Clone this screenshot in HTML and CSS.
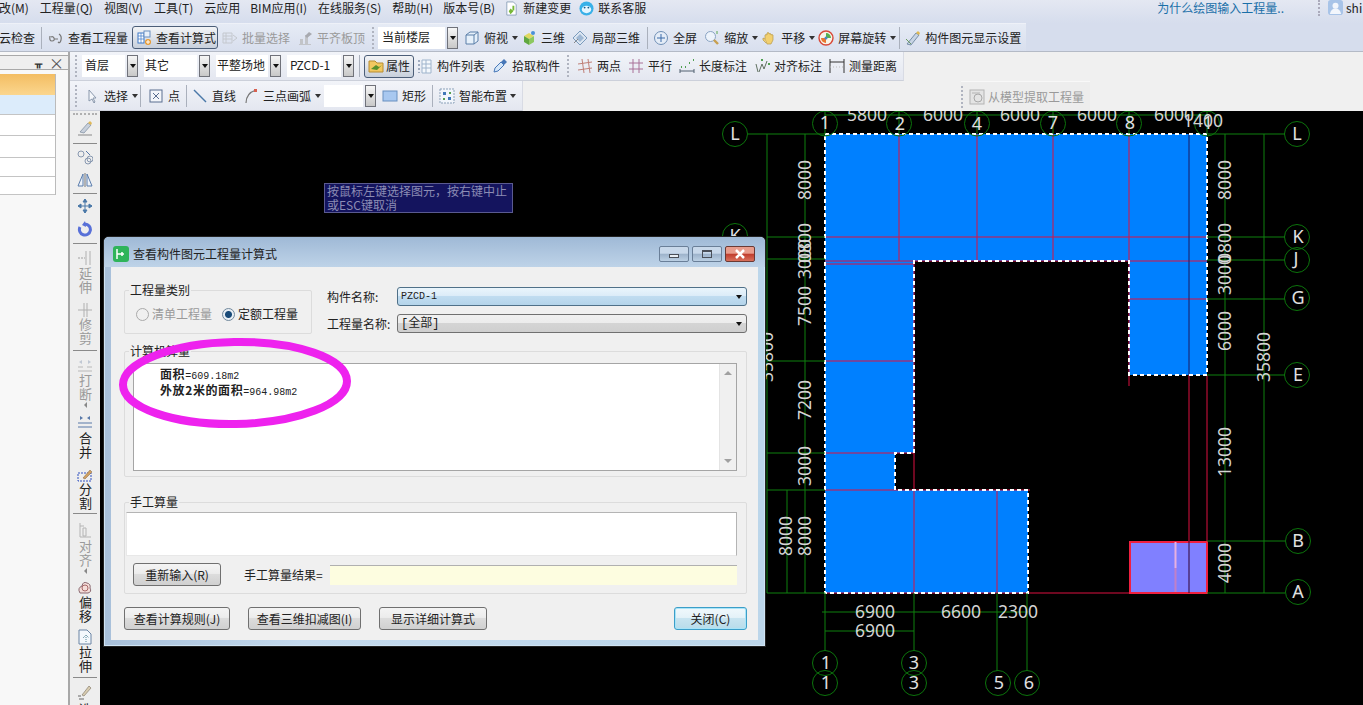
FILE: index.html
```html
<!DOCTYPE html>
<html lang="zh-CN">
<head>
<meta charset="utf-8">
<title>查看构件图元工程量计算式</title>
<link rel="stylesheet" href="styles.css">
</head>
<body>
<svg class="defs" width="0" height="0" aria-hidden="true">
  <defs>
    <symbol id="i-glasses" viewBox="0 0 16 16"><path d="M2 6q-1 5 2 5t2-3q-1-2-3-1M11 4q3 2 2 6t-3 2M6 9h4" fill="none" stroke="#777" stroke-width="1.2"/></symbol>
    <symbol id="i-calc" viewBox="0 0 16 16"><rect x="2" y="3" width="6" height="10" fill="#fff" stroke="#3c78c8"/><path d="M2 6h6M2 9h6M5 3v10" stroke="#3c78c8" stroke-width=".7"/><rect x="8" y="1" width="6" height="6" fill="#e8f0fa" stroke="#6a8fc0"/><circle cx="12" cy="12" r="3" fill="#e89a30"/><path d="M10 12h4M12 10v4" stroke="#fff"/></symbol>
    <symbol id="i-batch" viewBox="0 0 16 16"><path d="M1 3h9v10H1zM1 6h9M1 9h9M4 3v10M11 5l4 3-4 3" fill="none" stroke="#c4c8ce"/></symbol>
    <symbol id="i-align" viewBox="0 0 16 16"><path d="M2 14h12v1H2zM3 9h3v5H3zM8 5h3v9H8z" fill="#c2c4c8"/><path d="M12 2l3 2-5 4-2-2z" fill="#a8aab0"/></symbol>
    <symbol id="i-cube" viewBox="0 0 16 16"><path d="M2 5l4-3h8v9l-4 3H2z" fill="#e6f0fa" stroke="#5b7fa8"/><path d="M2 5h8v9M10 5l4-3" fill="none" stroke="#5b7fa8"/></symbol>
    <symbol id="i-3d" viewBox="0 0 16 16"><path d="M3 6l5-3 5 3-5 3z" fill="#e0d860"/><path d="M3 6v6l5 3V9z" fill="#60a840"/><path d="M13 6v6l-5 3V9z" fill="#8cc860"/><circle cx="12" cy="3" r="2" fill="#4a90d8"/></symbol>
    <symbol id="i-local3d" viewBox="0 0 16 16"><path d="M8 1l7 7-7 7-7-7z" fill="#dce6f2" stroke="#7a9abc"/><path d="M4 8l4-4 4 4-4 4z" fill="#9fb8d4"/><path d="M2 13l4-4" stroke="#888"/></symbol>
    <symbol id="i-full" viewBox="0 0 16 16"><circle cx="8" cy="8" r="6.5" fill="#e4ecf7" stroke="#6f8fb5"/><path d="M8 4v8M4 8h8" stroke="#3a6ba8"/></symbol>
    <symbol id="i-zoom" viewBox="0 0 16 16"><circle cx="6.5" cy="6.5" r="5" fill="#edf3fb" stroke="#8aa4c4"/><path d="M10 10l4 4" stroke="#c8a050" stroke-width="2.4"/><path d="M13 1v3" stroke="#58a850"/></symbol>
    <symbol id="i-hand" viewBox="0 0 16 16"><path d="M4 9V5q1-1 2 0V3q1-1 2 0v1q1-1 2 0v1q1-1 2 0v5l-2 4H6z" fill="#f2d070" stroke="#b89a48" stroke-width=".7"/><path d="M4 9l-2-1v2l3 3" fill="#f2d070" stroke="#b89a48" stroke-width=".7"/></symbol>
    <symbol id="i-rot" viewBox="0 0 16 16"><circle cx="8" cy="8" r="7" fill="#f8f4e8" stroke="#d84838" stroke-width="1.4"/><path d="M8 3a5 5 0 0 1 5 5H8z" fill="#58b050"/><path d="M8 13a5 5 0 0 1-5-5h5z" fill="#e87830"/><circle cx="8" cy="8" r="1.5" fill="#4888c8"/></symbol>
    <symbol id="i-show" viewBox="0 0 16 16"><path d="M2 14L11 3l3 2-8 10z" fill="#c8d4e4" stroke="#7890a8"/><path d="M11 3l2-2 2 2-1 2z" fill="#e0b850"/><path d="M1 9l5 5" stroke="#689860"/></symbol>
    <symbol id="i-doc" viewBox="0 0 16 16"><path d="M3 1h7l3 3v11H3z" fill="#fff" stroke="#8fa3bb"/><path d="M7 8l3 3-3 3-2-3zM9 5h2v5H9z" fill="#78b838"/></symbol>
    <symbol id="i-face" viewBox="0 0 16 16"><circle cx="8" cy="8" r="7.5" fill="#38b0e8"/><ellipse cx="8" cy="9" rx="5" ry="4" fill="#e4f6ff"/><circle cx="6" cy="7" r="1" fill="#1c5a88"/><circle cx="10" cy="7" r="1" fill="#1c5a88"/></symbol>
    <symbol id="i-user" viewBox="0 0 16 16"><rect width="16" height="16" rx="3" fill="#a8c4e8"/><circle cx="8" cy="6" r="3.2" fill="#f2f6fc"/><path d="M2 15q1-6 6-6t6 6z" fill="#f2f6fc"/></symbol>
    <symbol id="i-prop" viewBox="0 0 16 16"><path d="M1 3h6l2 2h6v9H1z" fill="#f2c860" stroke="#b88c30"/><path d="M3 11l5-4 3 2 3-2-5 5z" fill="#58902c"/></symbol>
    <symbol id="i-list" viewBox="0 0 16 16"><path d="M2 2v2M2 6v2M2 10v2M2 14v1" stroke="#8090a8" stroke-width="1.4"/><path d="M5 2h9v13H5zM5 6h9M5 10h9M9 2v13" fill="#f4f8fc" stroke="#9fb4cc"/></symbol>
    <symbol id="i-pick" viewBox="0 0 16 16"><path d="M2 14l1-4 6-6 3 3-6 6z" fill="#d4e6f8" stroke="#4878b8"/><path d="M9 4l3-3 3 3-3 3z" fill="#4878b8"/></symbol>
    <symbol id="i-twop" viewBox="0 0 16 16"><path d="M5 1l2 14M11 1l2 14M1 6l14-2M1 12l14-2" stroke="#c08078" fill="none"/></symbol>
    <symbol id="i-para" viewBox="0 0 16 16"><path d="M5 1v14M11 1v14M1 5h14M1 11h14" stroke="#a87098" fill="none"/></symbol>
    <symbol id="i-dim" viewBox="0 0 16 16"><path d="M1 11v4M15 11v4M1 13h14" stroke="#506070" fill="none"/><path d="M2 9h1M6 9h1M10 5h1M14 2h1" stroke="#50a050" stroke-width="2"/></symbol>
    <symbol id="i-adim" viewBox="0 0 16 16"><path d="M2 6l2 8M5 14l3-8M8 6l2 5M10 11l3-8" stroke="#607060" fill="none"/><path d="M7 2h2M14 6h2" stroke="#50a050" stroke-width="2"/></symbol>
    <symbol id="i-measure" viewBox="0 0 16 16"><path d="M1 1v14M15 1v14M1 4h14" stroke="#333" fill="none"/><path d="M1 9h14" stroke="#bbb" stroke-dasharray="1 2"/></symbol>
    <symbol id="i-cursor" viewBox="0 0 16 16"><path d="M5 2v11l3-2 2 4 1-1-2-4h3z" fill="#f4f6fa" stroke="#8a98ac"/></symbol>
    <symbol id="i-point" viewBox="0 0 16 16"><rect x="2" y="2" width="12" height="12" fill="#f4f6fa" stroke="#5a6e90"/><path d="M5 5l6 6M11 5l-6 6" stroke="#5a6e90"/></symbol>
    <symbol id="i-line" viewBox="0 0 16 16"><path d="M2 2l12 12" stroke="#4a78a8" stroke-width="1.4"/></symbol>
    <symbol id="i-arc" viewBox="0 0 16 16"><path d="M3 15Q3 5 13 2" fill="none" stroke="#787878" stroke-width="1.2"/><path d="M11 1h3v3h-3z" fill="#d86050"/></symbol>
    <symbol id="i-rect" viewBox="0 0 16 16"><rect x="1" y="3" width="14" height="10" fill="#a8c8f0" stroke="#6890c0"/></symbol>
    <symbol id="i-smart" viewBox="0 0 16 16"><rect x="1" y="1" width="14" height="14" fill="#f2f6fc" stroke="#8aa0b8" stroke-dasharray="2 1"/><path d="M4 4h3v3H4zM9 9h3v3H9z" fill="#3f78b8"/><path d="M10 4h2v2h-2zM4 10h2v2H4z" fill="#58a050"/></symbol>
    <symbol id="i-extract" viewBox="0 0 16 16"><rect x="1" y="1" width="14" height="14" fill="#e4e4e4" stroke="#b4b4b4"/><circle cx="9" cy="9" r="4" fill="none" stroke="#a8a8a8"/><path d="M3 4h8" stroke="#b4b4b4"/></symbol>
    <symbol id="i-brush" viewBox="0 0 16 16"><path d="M1 15h14" stroke="#888"/><path d="M3 12l8-9 3 2-7 8z" fill="#c8d0dc" stroke="#7a8a9c" stroke-width=".7"/><path d="M11 3l2-2 2 2-1 2z" fill="#e0b858"/></symbol>
    <symbol id="i-copy" viewBox="0 0 16 16"><circle cx="4" cy="5" r="3" fill="none" stroke="#8898b0"/><circle cx="11" cy="12" r="3" fill="none" stroke="#8898b0"/><circle cx="13" cy="10" r="3" fill="none" stroke="#8898b0"/><path d="M9 2l4 4" stroke="#5878a8"/></symbol>
    <symbol id="i-mirror" viewBox="0 0 16 16"><path d="M8 1v14" stroke="#777"/><path d="M6 2v12H1zM10 2v12h5z" fill="#eef3fa" stroke="#5a7cac"/></symbol>
    <symbol id="i-move" viewBox="0 0 16 16"><path d="M8 1v14M1 8h14M8 1L6 4h4zM8 15l-2-3h4zM1 8l3-2v4zM15 8l-3-2v4z" fill="#4a78a8" stroke="#4a78a8"/></symbol>
    <symbol id="i-rotate" viewBox="0 0 16 16"><path d="M8 3a5.5 5.5 0 1 1-5 3" fill="none" stroke="#5870d8" stroke-width="3"/><path d="M8 0l-3 4 4 2z" fill="#5870d8"/></symbol>
    <symbol id="i-extend" viewBox="0 0 16 16"><path d="M13 1v14M9 1v14" stroke="#b0b0b0" fill="none"/><path d="M1 8h7" stroke="#a0a0a0" stroke-dasharray="2 1"/></symbol>
    <symbol id="i-trim" viewBox="0 0 16 16"><path d="M7 1v14M10 1v14M1 8h14" stroke="#b0b0b0" fill="none"/></symbol>
    <symbol id="i-break" viewBox="0 0 16 16"><path d="M1 10h5M10 10h5M1 14h14" stroke="#b8b8b8"/><path d="M2 5l3-2v4zM14 5l-3-2v4z" fill="#c0c8d4"/></symbol>
    <symbol id="i-merge" viewBox="0 0 16 16"><path d="M1 9h14M1 13h14" stroke="#5878a8"/><path d="M6 4L3 2v4zM10 4l3-2v4z" fill="#5878a8"/></symbol>
    <symbol id="i-split" viewBox="0 0 16 16"><rect x="1" y="6" width="13" height="8" fill="none" stroke="#3050c0" stroke-dasharray="2 1"/><path d="M6 11l7-8 2 2-7 7z" fill="#d0a060" stroke="#806040" stroke-width=".5"/></symbol>
    <symbol id="i-alignv" viewBox="0 0 16 16"><path d="M3 1v14h11M6 6h3v8H6zM3 4h4" fill="none" stroke="#b4b4b4"/></symbol>
    <symbol id="i-offset" viewBox="0 0 16 16"><path d="M3 14q-3-5 2-7 1-5 5-3 4 1 3 5 2 4-2 5z" fill="#f4dcd8" stroke="#8a6870"/><circle cx="8" cy="9" r="3" fill="none" stroke="#a86868"/></symbol>
    <symbol id="i-stretch" viewBox="0 0 16 16"><path d="M2 1h8l4 4v10H2z" fill="#f4f8fc" stroke="#6a84a4"/><path d="M9 6v7M6 9l3-3 3 3" fill="none" stroke="#5a8a9c" stroke-dasharray="1 1"/></symbol>
    <symbol id="i-pencil" viewBox="0 0 16 16"><path d="M2 15h5M1 12h3" stroke="#666"/><path d="M5 11l7-9 2 2-7 8z" fill="#d8ccb0" stroke="#8a8070" stroke-width=".7"/></symbol>
  </defs>
</svg>

<div class="app">
  <div class="menubar">
    <span class="menu-item first">改(M)</span>
    <span class="menu-item">工程量(Q)</span>
    <span class="menu-item">视图(V)</span>
    <span class="menu-item">工具(T)</span>
    <span class="menu-item">云应用</span>
    <span class="menu-item narrow">BIM应用(I)</span>
    <span class="menu-item">在线服务(S)</span>
    <span class="menu-item">帮助(H)</span>
    <span class="menu-item narrow">版本号(B)</span>
    <span class="tool ml9"><svg class="ico"><use href="#i-doc"/></svg><span>新建变更</span></span>
    <span class="tool ml8"><svg class="ico"><use href="#i-face"/></svg><span>联系客服</span></span>
    <span class="menu-right">
      <a class="help-link">为什么绘图输入工程量..</a>
      <span class="grip-v"></span>
      <svg class="ico"><use href="#i-user"/></svg>
      <span class="user">shi</span>
    </span>
  </div>

  <div class="mainbar">
    <div class="tb tb-top">
      <span class="txt ml-1">云检查</span>
      <span class="sep ml6"></span>
      <span class="tool ml6"><svg class="ico"><use href="#i-glasses"/></svg><span>查看工程量</span></span>
      <span class="tool pressed ml4 w86"><svg class="ico"><use href="#i-calc"/></svg><span>查看计算式</span></span>
      <span class="tool off ml4"><svg class="ico"><use href="#i-batch"/></svg><span>批量选择</span></span>
      <span class="tool off ml7"><svg class="ico"><use href="#i-align"/></svg><span>平齐板顶</span></span>
      <span class="grip ml7"></span>
      <span class="combo ml4 w80"><span class="combo-field">当前楼层</span><span class="combo-arrow"></span></span>
      <span class="tool ml6"><svg class="ico"><use href="#i-cube"/></svg><span>俯视</span></span><span class="caret ml4"></span>
      <span class="tool ml3"><svg class="ico"><use href="#i-3d"/></svg><span>三维</span></span>
      <span class="tool ml7"><svg class="ico"><use href="#i-local3d"/></svg><span>局部三维</span></span>
      <span class="sep ml7"></span>
      <span class="tool ml5"><svg class="ico"><use href="#i-full"/></svg><span>全屏</span></span>
      <span class="tool ml7"><svg class="ico"><use href="#i-zoom"/></svg><span>缩放</span></span><span class="caret ml4"></span>
      <span class="tool ml3"><svg class="ico"><use href="#i-hand"/></svg><span>平移</span></span><span class="caret ml4"></span>
      <span class="tool ml3"><svg class="ico"><use href="#i-rot"/></svg><span>屏幕旋转</span></span><span class="caret ml4"></span>
      <span class="sep ml3"></span>
      <span class="tool ml5"><svg class="ico"><use href="#i-show"/></svg><span>构件图元显示设置</span></span>
    </div>
  </div>

  <div class="work">
    <aside class="side">
      <div class="side-head"><span class="pin">ᚂ</span><span class="side-close">×</span></div>
      <div class="side-table">
        <div class="st-row st-head"></div>
        <div class="st-row st-sel"></div>
        <div class="st-row st-a"></div>
        <div class="st-row st-b"></div>
        <div class="st-row st-c"></div>
        <div class="st-row st-c"></div>
      </div>
    </aside>

    <div class="main">
      <div class="tb-row">
        <div class="tb tb-lower">
          <span class="grip ml5"></span>
          <span class="combo ml5 w56"><span class="combo-field snug">首层</span><span class="combo-arrow"></span></span>
          <span class="combo ml6 w66"><span class="combo-field flush">其它</span><span class="combo-arrow"></span></span>
          <span class="combo ml6 w65"><span class="combo-field flush">平整场地</span><span class="combo-arrow"></span></span>
          <span class="combo ml6 w67"><span class="combo-field snug">PZCD-1</span><span class="combo-arrow"></span></span>
          <span class="sep ml5"></span>
          <span class="tool pressed tight ml4 w50"><svg class="ico"><use href="#i-prop"/></svg><span>属性</span></span>
          <span class="tool ml3"><svg class="ico"><use href="#i-list"/></svg><span>构件列表</span></span>
          <span class="tool ml7"><svg class="ico"><use href="#i-pick"/></svg><span>拾取构件</span></span>
          <span class="grip ml7"></span>
          <span class="tool ml8"><svg class="ico"><use href="#i-twop"/></svg><span>两点</span></span>
          <span class="tool ml7"><svg class="ico"><use href="#i-para"/></svg><span>平行</span></span>
          <span class="tool ml7"><svg class="ico"><use href="#i-dim"/></svg><span>长度标注</span></span>
          <span class="tool ml7"><svg class="ico"><use href="#i-adim"/></svg><span>对齐标注</span></span>
          <span class="tool ml7"><svg class="ico"><use href="#i-measure"/></svg><span>测量距离</span></span>
        </div>
      </div>
      <div class="tb-row">
        <div class="tb tb-lower">
          <span class="grip ml5"></span>
          <span class="tool ml7"><svg class="ico"><use href="#i-cursor"/></svg><span>选择</span></span><span class="caret ml4"></span>
          <span class="sep ml2"></span>
          <span class="tool ml7"><svg class="ico"><use href="#i-point"/></svg><span>点</span></span>
          <span class="sep ml6"></span>
          <span class="tool ml5"><svg class="ico"><use href="#i-line"/></svg><span>直线</span></span>
          <span class="tool ml7"><svg class="ico"><use href="#i-arc"/></svg><span>三点画弧</span></span><span class="caret ml4"></span>
          <span class="combo ml3 w52"><span class="combo-field"></span><span class="combo-arrow"></span></span>
          <span class="tool ml6"><svg class="ico"><use href="#i-rect"/></svg><span>矩形</span></span>
          <span class="sep ml6"></span>
          <span class="tool ml6"><svg class="ico"><use href="#i-smart"/></svg><span>智能布置</span></span><span class="caret ml3"></span>
        </div>
        <div class="tb tb-extract">
          <span class="grip"></span>
          <span class="tool off ml6 close-gap"><svg class="ico"><use href="#i-extract"/></svg><span>从模型提取工程量</span></span>
        </div>
      </div>

      <div class="stage">
        <nav class="vtools">
          <span class="grip-h mt2"></span>
          <svg class="ico mt5"><use href="#i-brush"/></svg>
          <span class="vsep mt7"></span>
          <svg class="ico mt5"><use href="#i-copy"/></svg>
          <svg class="ico mt7"><use href="#i-mirror"/></svg>
          <span class="vsep mt5"></span>
          <svg class="ico mt4"><use href="#i-move"/></svg>
          <svg class="ico mt7"><use href="#i-rotate"/></svg>
          <span class="vsep mt6"></span>
          <svg class="ico mt6"><use href="#i-extend"/></svg>
          <span class="vtext off mt1">延伸</span>
          <svg class="ico mt7"><use href="#i-trim"/></svg>
          <span class="vtext off">修剪</span>
          <span class="vsep mt4"></span>
          <svg class="ico mt6"><use href="#i-break"/></svg>
          <span class="vtext off mt1">打断</span>
          <span class="vcaret"></span>
          <svg class="ico mt6"><use href="#i-merge"/></svg>
          <span class="vtext mt2">合并</span>
          <svg class="ico mt7"><use href="#i-split"/></svg>
          <span class="vtext">分割</span>
          <span class="vsep mt2"></span>
          <svg class="ico mt8"><use href="#i-alignv"/></svg>
          <span class="vtext off mt2">对齐</span>
          <span class="vcaret"></span>
          <svg class="ico mt5"><use href="#i-offset"/></svg>
          <span class="vtext mt1">偏移</span>
          <svg class="ico mt5"><use href="#i-stretch"/></svg>
          <span class="vtext mt1">拉伸</span>
          <span class="vsep mt3"></span>
          <svg class="ico mt6"><use href="#i-pencil"/></svg>
          <span class="vtext mt3">选择</span>
        </nav>

        <div class="canvas">
          <svg class="drawing" viewBox="100 111 1263 594" xmlns="http://www.w3.org/2000/svg">
            <path class="area" d="M825 134H1207V375H1129V261H914V453H895V490H1028V593H825Z"/>
            <g class="redline">
              <path d="M899 134V261M977 134V261M1053 134V261M1129 134V261M825 237H1207M825 261H1207M825 264H914M1129 299H1207M825 361H914M825 453H914M825 490H1030M914 264V593M997 490V593M825 593H1130M1189 375V541M1207 375V541M1129 375V386M1129 261V375"/>
            </g>
            <path class="darkline" d="M1189 134V375"/>
            <path class="outline" d="M825 134H1207V375H1129V261H914V453H895V490H1028V593H825Z"/>
            <rect class="opening" x="1130" y="542" width="77" height="51"/>
            <path class="opening-a" d="M1175.500 542V568"/>
            <path class="opening-b" d="M1175.500 568V592"/>
            <path class="opening-c" d="M1189 541V593"/>

            <g class="greenline">
              <path d="M825 115H1207M825 111V134M899 111V134M977 111V134M1053 111V134M1129 111V134M1207 111V134"/>
              <path d="M748 134H825M1207 134H1285M767 134V593M805 134V593M1225 134V593M1264 134V593M767 237H825M1207 237H1285M767 259H825M1207 260H1285M1207 299H1285M767 361H825M1207 375H1285M767 453H825M767 490H825M787 490V593M767 593H825M1207 541H1285M1207 593H1285"/>
              <path d="M825 593V651M914 593V651M997 593V671M1027 593V671M822 612H1028M825 631H914"/>
            </g>
            <g class="axis">
              <circle cx="735" cy="134" r="12.500"/><circle cx="735" cy="236" r="12.500"/>
              <circle cx="825" cy="123.500" r="12.500"/><circle cx="899" cy="123.500" r="12.500"/><circle cx="977" cy="123.500" r="12.500"/><circle cx="1053" cy="123.500" r="12.500"/><circle cx="1129" cy="123.500" r="12.500"/><circle cx="1207" cy="123.500" r="12.500"/>
              <circle cx="1297" cy="134" r="12.500"/><circle cx="1297" cy="237" r="12.500"/><circle cx="1297" cy="260" r="12.500"/><circle cx="1297" cy="298" r="12.500"/><circle cx="1297" cy="375" r="12.500"/><circle cx="1298" cy="541" r="12.500"/><circle cx="1298" cy="592" r="12.500"/>
              <circle cx="825" cy="663" r="12.500"/><circle cx="825" cy="683" r="12.500"/><circle cx="914" cy="663" r="12.500"/><circle cx="914" cy="683" r="12.500"/><circle cx="998" cy="683" r="12.500"/><circle cx="1027" cy="683" r="12.500"/>
            </g>
            <g class="axis-label">
              <text x="735" y="140">L</text><text x="735" y="242">K</text>
              <text x="825" y="129">1</text><text x="900" y="130">2</text><text x="977" y="130">4</text><text x="1053" y="129">7</text><text x="1130" y="129">8</text><text x="1208" y="129">1</text>
              <text x="1297" y="140">L</text><text x="1298" y="243">K</text><text x="1296" y="265">J</text><text x="1298" y="304">G</text><text x="1298" y="381">E</text><text x="1298" y="547">B</text><text x="1298" y="598">A</text>
              <text x="826" y="669">1</text><text x="826" y="689">1</text><text x="914" y="669">3</text><text x="914" y="689">3</text><text x="999" y="689">5</text><text x="1029" y="689">6</text>
            </g>
            <g class="dim">
              <text x="867" y="121">5800</text><text x="943" y="121">6000</text><text x="1020" y="121">6000</text><text x="1097" y="121">6000</text><text x="1174" y="121">6000</text><text x="1203" y="127">1400</text>
              <text x="875" y="618">6900</text><text x="961" y="618">6600</text><text x="1018" y="618">2300</text><text x="875" y="637">6900</text>
              <text transform="translate(811 180) rotate(-90)">8000</text>
              <text transform="translate(811 243) rotate(-90)">0800</text>
              <text transform="translate(811 259) rotate(-90)">3000</text>
              <text transform="translate(811 306) rotate(-90)">7500</text>
              <text transform="translate(811 400) rotate(-90)">7200</text>
              <text transform="translate(811 466) rotate(-90)">3000</text>
              <text transform="translate(811 536) rotate(-90)">8000</text>
              <text transform="translate(792 536) rotate(-90)">8000</text>
              <text transform="translate(773 357) rotate(-90)">35800</text>
              <text transform="translate(1231 180) rotate(-90)">8000</text>
              <text transform="translate(1231 243) rotate(-90)">0800</text>
              <text transform="translate(1231 275) rotate(-90)">3000</text>
              <text transform="translate(1231 331) rotate(-90)">6000</text>
              <text transform="translate(1231 452) rotate(-90)">13000</text>
              <text transform="translate(1231 563) rotate(-90)">4000</text>
              <text transform="translate(1270 357) rotate(-90)">35800</text>
            </g>
          </svg>
          <div class="cad-tip">按鼠标左键选择图元，按右键中止<br>或ESC键取消</div>
        </div>
      </div>
    </div>
  </div>

  <section class="dialog">
    <header class="dlg-title">
      <svg class="dlg-logo" viewBox="0 0 16 16"><rect width="16" height="16" rx="3" fill="#2fb45a"/><path d="M4 3v10M4 8h7M9 6v4" stroke="#fff" stroke-width="1.500" fill="none"/></svg>
      <span class="dlg-name">查看构件图元工程量计算式</span>
      <span class="win-btns">
        <span class="win-btn"><span class="glyph-min"></span></span>
        <span class="win-btn"><span class="glyph-max"></span></span>
        <span class="win-btn win-close"><svg viewBox="0 0 12 10" width="12" height="10"><path d="M2 1l8 8M10 1l-8 8" stroke="#fff" stroke-width="2.500"/></svg></span>
      </span>
    </header>
    <div class="dlg-body">
      <div class="dlg-top">
        <fieldset class="group type-group">
          <legend>工程量类别</legend>
          <span class="radio-row">
            <span class="radio off"></span><span class="radio-label off">清单工程量</span>
            <span class="radio on"></span><span class="radio-label">定额工程量</span>
          </span>
        </fieldset>
        <div class="dlg-fields">
          <div class="field"><label>构件名称:</label><span class="select sel-focus">PZCD-1<i></i></span></div>
          <div class="field"><label>工程量名称:</label><span class="select">[全部]<i></i></span></div>
        </div>
      </div>
      <fieldset class="group calc-group">
        <legend>计算机算量</legend>
        <div class="calc-box">
          <div class="calc-text">
            <div class="calc-line"><b>面积</b>=609.18m2</div>
            <div class="calc-line"><b>外放2米的面积</b>=964.98m2</div>
          </div>
          <div class="scroll"><i class="sc-up"></i><i class="sc-down"></i></div>
        </div>
      </fieldset>
      <fieldset class="group manual-group">
        <legend>手工算量</legend>
        <div class="manual-input"></div>
        <div class="manual-row">
          <span class="btn btn-reset">重新输入(R)</span>
          <span class="manual-label">手工算量结果=</span>
          <span class="manual-result"></span>
        </div>
      </fieldset>
      <div class="dlg-foot">
        <span class="btn btn-rule">查看计算规则(J)</span>
        <span class="btn btn-3d">查看三维扣减图(I)</span>
        <span class="btn btn-detail">显示详细计算式</span>
        <span class="btn btn-close">关闭(C)</span>
      </div>
    </div>
    <svg class="marker" viewBox="0 0 240 96" width="240" height="96"><ellipse cx="120" cy="48" rx="112" ry="41" transform="rotate(-1 120 48)"/></svg>
  </section>
</div>
</body>
</html>
```
FILE: styles.css
```css
* { box-sizing: border-box; }
html, body { margin: 0; padding: 0; }
body {
  font-family: "Noto Sans CJK SC", "Liberation Sans", sans-serif;
  font-size: 12px;
  color: #222;
  background: #000;
  overflow: hidden;
}
.defs { position: absolute; }
.app {
  position: relative;
  width: 1363px;
  height: 705px;
  overflow: hidden;
  display: flex;
  flex-direction: column;
  background: #eee;
}
.ico { width: 16px; height: 16px; flex: none; display: block; }

/* spacing helpers */
.ml-1 { margin-left: -1px; } .ml2 { margin-left: 2px; } .ml3 { margin-left: 3px; }
.ml4 { margin-left: 4px; } .ml5 { margin-left: 5px; } .ml6 { margin-left: 6px; }
.ml7 { margin-left: 7px; } .ml8 { margin-left: 8px; } .ml9 { margin-left: 9px; }
.mt1 { margin-top: 1px; } .mt2 { margin-top: 2px; } .mt3 { margin-top: 3px; }
.mt4 { margin-top: 4px; } .mt5 { margin-top: 5px; } .mt6 { margin-top: 6px; }
.mt7 { margin-top: 7px; } .mt8 { margin-top: 8px; }
.w50 { width: 50px; } .w52 { width: 52px; } .w56 { width: 56px; } .w65 { width: 65px; }
.w66 { width: 66px; } .w67 { width: 67px; } .w80 { width: 80px; } .w86 { width: 86px; }

/* menu */
.menubar {
  height: 23px;
  flex: none;
  display: flex;
  align-items: flex-start;
  line-height: 16px;
  background: linear-gradient(#e4e8f2, #d6dded);
  overflow: hidden;
}
.menu-item { margin-left: 11px; white-space: nowrap; }
.menu-item.first { margin-left: -1px; }
.menu-item.narrow { margin-left: 10px; }
.menubar .tool { height: 16px; }
.menubar .ico { width: 15px; height: 15px; }
.menu-right { margin-left: auto; display: flex; align-items: flex-start; }
.help-link { color: #1a6fa8; margin-right: 34px; }
.grip-v { width: 2px; height: 16px; border-left: 2px dotted #aab; margin-right: 8px; }
.user { margin-left: 3px; width: 17px; overflow: hidden; }

.mainbar {
  height: 29px;
  flex: none;
  background: #d6dded;
  border-bottom: 1px solid #b4bac6;
}

/* toolbars */
.tb {
  display: flex;
  align-items: center;
  width: fit-content;
  white-space: nowrap;
}
.tb-top {
  height: 28px;
  padding-right: 5px;
  background: linear-gradient(#e6ebf5, #d8dfee);
  border-top: 1px solid #eef1f8;
}
.tb-lower {
  height: 100%;
  padding-right: 6px;
  background: linear-gradient(#f2f4f9, #e4e7f0);
  border-bottom: 1px solid #ccd0da;
  border-right: 1px solid #d8dbe4;
}
.tb-row { height: 30px; flex: none; display: flex; background: #f0f0f0; }
.tb-row:first-child { height: 29px; }
.tb-extract {
  height: 100%;
  width: 129px;
  margin-left: 438px;
  background: #ededed;
  border-top: 1px solid #f8f8f8;
}
.tool { display: flex; align-items: center; gap: 4px; flex: none; }
.tool span { line-height: 16px; }
.tool.close-gap { gap: 3px; }
.off { color: #9a9a9a; }
.pressed {
  height: 23px;
  padding-left: 3px;
  border: 1px solid #4c5e78;
  border-radius: 3px;
  background: linear-gradient(#f3f4f6, #c8d0dc);
}
.pressed.tight { gap: 2px; }
.txt { flex: none; line-height: 16px; }
.sep { width: 1px; height: 22px; background: #aab0bc; flex: none; }
.grip { width: 2px; height: 22px; border-left: 2px dotted #b0b4c0; flex: none; }
.caret {
  width: 0; height: 0; flex: none;
  border: 3.500px solid transparent;
  border-top: 4px solid #333;
  border-bottom: 0;
}
.combo { display: flex; gap: 2px; height: 22px; flex: none; }
.combo-field {
  flex: 1;
  background: #fff;
  padding-left: 4px;
  line-height: 20px;
  white-space: nowrap;
  overflow: hidden;
}
.combo-field.snug { padding-left: 3px; }
.combo-field.flush { padding-left: 1px; }
.combo-arrow {
  width: 11px;
  flex: none;
  position: relative;
  border: 1px solid #70727a;
  background: linear-gradient(#f6f6f6, #c8c8c8);
}
.combo-arrow::after {
  content: "";
  position: absolute;
  left: 1.500px; top: 8px;
  border: 3px solid transparent;
  border-top: 4px solid #111;
  border-bottom: 0;
}

/* side panel */
.work { flex: 1; min-height: 0; display: flex; }
.side {
  width: 70px;
  flex: none;
  background: #f8f8f8;
  border-right: 2px solid #a8a8a8;
  padding-top: 3px;
}
.side-head {
  height: 15px;
  margin-right: -1px;
  display: flex;
  justify-content: flex-end;
  align-items: center;
  gap: 7px;
  padding-right: 4px;
  background: #efefef;
  border: 1px solid #a9a9a9;
  border-left: 0;
  line-height: 13px;
  overflow: hidden;
}
.pin { font-weight: 700; font-size: 10px; color: #333; }
.side-close { font-size: 15px; color: #555; }
.side-table { width: 56px; margin-top: 4px; border-right: 1px solid #bbb; }
.st-row { border-bottom: 1px solid #c4c4c4; background: #fff; }
.st-head { height: 21px; background: linear-gradient(#f3bd62, #fbd68e); border-bottom: 0; }
.st-sel { height: 20px; background: #dcecfb; }
.st-a { height: 21px; }
.st-b { height: 22px; }
.st-c { height: 19px; }
.st-c:last-child { height: 18px; }

/* stage */
.main { flex: 1; min-width: 0; display: flex; flex-direction: column; }
.stage { flex: 1; min-height: 0; display: flex; }
.vtools {
  width: 30px;
  flex: none;
  display: flex;
  flex-direction: column;
  align-items: center;
  background: #eee;
  overflow: hidden;
}
.grip-h { width: 24px; height: 2px; border-top: 2px dotted #b0b0b0; flex: none; }
.vsep { width: 24px; height: 1px; background: #8a8a8a; flex: none; }
.vtext {
  writing-mode: vertical-rl;
  text-orientation: upright;
  font-size: 13px;
  line-height: 14px;
  height: 28px;
  letter-spacing: 1px;
  flex: none;
}
.vcaret {
  width: 0; height: 6px; flex: none;
  border: 3px solid transparent;
  border-right: 3px solid #888;
  border-left: 0;
}
.canvas { flex: 1; min-width: 0; position: relative; background: #000; overflow: hidden; }
.drawing { display: block; width: 100%; height: 100%; }
.area { fill: #0080ff; }
.redline path { fill: none; stroke: #dc1040; stroke-width: 1; }
.darkline { fill: none; stroke: #1a1a60; stroke-width: 1; }
.outline { fill: none; stroke: #fff; stroke-width: 2; stroke-dasharray: 4 3; }
.opening { fill: #8080ff; stroke: #f02040; stroke-width: 2; }
.opening-a { stroke: #e8b0e0; stroke-width: 2; }
.opening-b { stroke: #c080c8; stroke-width: 2; }
.opening-c { stroke: #300030; stroke-width: 1; }
.greenline path { fill: none; stroke: #0e800e; stroke-width: 1; }
.axis circle { fill: none; stroke: #0c740c; stroke-width: 1; }
.axis-label text {
  font-family: "Noto Sans", sans-serif;
  font-size: 18px;
  fill: #e0e0e0;
  text-anchor: middle;
}
.dim text {
  font-family: "Noto Sans", sans-serif;
  font-size: 17.500px;
  fill: #d4d4d4;
  text-anchor: middle;
}
.cad-tip {
  position: absolute;
  left: 224px;
  top: 72px;
  width: 189px;
  height: 30px;
  padding: 0 2px;
  background: #14145e;
  border: 1px solid #5a5a90;
  color: #8c8cb4;
  line-height: 14px;
  white-space: nowrap;
  overflow: hidden;
}

/* dialog */
.dialog {
  position: absolute;
  left: 104px;
  top: 237px;
  width: 661px;
  height: 409px;
  display: flex;
  flex-direction: column;
  padding: 0 7px 6px 7px;
  border-radius: 5px 5px 0 0;
  background: linear-gradient(90deg, #a8c0da, #c4daee 30%, #bcd6ea);
  box-shadow: inset 0 0 0 1px #cfe4f4, 0 0 0 1px #222;
}
.dlg-title {
  height: 30px;
  flex: none;
  margin: 0 -7px;
  padding: 9px 10px 0 9px;
  display: flex;
  align-items: flex-start;
  border-radius: 5px 5px 0 0;
  background: linear-gradient(#9fb9d6, #bed3e8);
}
.dlg-logo { width: 16px; height: 16px; flex: none; }
.dlg-name { margin-left: 4px; line-height: 16px; }
.win-btns { margin-left: auto; display: flex; gap: 3px; }
.win-btn {
  width: 30px;
  height: 16px;
  display: flex;
  align-items: center;
  justify-content: center;
  border: 1px solid #6a7f98;
  border-radius: 2px;
  background: linear-gradient(#c8d8ea 45%, #9cb2ca 50%, #bcd0e4);
}
.win-close { border-color: #6a3a34; background: linear-gradient(#e89c8c 45%, #c03c2c 50%, #d8705c); }
.glyph-min { width: 10px; height: 4px; margin-top: 4px; border: 1px solid #4a4f58; background: #e8eef4; }
.glyph-max { width: 10px; height: 8px; border: 2px solid #4a4f58; border-width: 2px 1px 1px; }
.dlg-body {
  flex: 1;
  min-height: 0;
  display: flex;
  flex-direction: column;
  background: #f0f0f0;
  padding: 0 11px 0 13px;
}
.group {
  margin: 0;
  padding: 0;
  min-width: 0;
  border: 1px solid #dcdcdc;
  border-radius: 2px;
}
.group legend { padding: 0 1px; line-height: 14px; height: 14px; }
.dlg-top { display: flex; align-items: flex-start; padding-top: 16px; }
.type-group { width: 188px; height: 51px; flex: none; }
.type-group legend { margin-left: 4px; }
.radio-row { display: flex; align-items: center; margin-top: 9px; margin-left: 11px; line-height: 16px; }
.radio {
  width: 13px; height: 13px; flex: none;
  border-radius: 50%;
  border: 1px solid #aaa;
  background: #f0f0f0;
}
.radio.on { background: radial-gradient(circle, #184a78 0 3px, #e8eef4 4px); border-color: #70889c; margin-left: 10px; }
.radio-label { margin-left: 3px; }
.dlg-fields { flex: 1; margin-left: 15px; padding-top: 4px; display: flex; flex-direction: column; gap: 8px; }
.field { display: flex; align-items: center; height: 19px; }
.field label { width: 70px; flex: none; white-space: nowrap; }
.select {
  flex: 1;
  height: 19px;
  position: relative;
  padding-left: 3px;
  font-family: "Liberation Mono", "Noto Sans CJK SC", monospace;
  font-size: 10px;
  line-height: 18px;
  border: 1px solid #707070;
  border-radius: 3px;
  background: linear-gradient(#f0f0f0, #ececec 45%, #d4d4d4 50%, #cfcfcf);
}
.field:last-child .select { font-size: 12px; }
.sel-focus { border-color: #4f7088; background: linear-gradient(#eaf5fc, #dcecf8 45%, #c0dcf0 50%, #b4d4ea); }
.select i {
  position: absolute;
  right: 4px;
  top: 7px;
  border: 3.500px solid transparent;
  border-top: 4px solid #111;
  border-bottom: 0;
}
.calc-group { height: 133px; margin-top: 10px; padding: 5px 9px 0 8px; }
.calc-group legend { margin-left: -4px; }
.calc-box {
  height: 108px;
  display: flex;
  background: #fff;
  border: 1px solid #a5a5a5;
}
.calc-text {
  flex: 1;
  padding: 2px 0 0 26px;
  font-family: "Liberation Mono", "Noto Sans CJK SC", monospace;
  font-size: 10px;
  line-height: 16px;
}
.calc-line { height: 16px; }
.calc-text b { font-family: "Noto Sans CJK SC", sans-serif; font-size: 12px; font-weight: 700; letter-spacing: .6px; }
.scroll {
  width: 17px;
  position: relative;
  background: #f0f0f0;
  border-left: 1px solid #e4e4e4;
}
.sc-up, .sc-down { position: absolute; left: 4px; border: 4px solid transparent; }
.sc-up { top: 7px; border-bottom: 4px solid #a0a0a0; border-top: 0; }
.sc-down { bottom: 7px; border-top: 4px solid #a0a0a0; border-bottom: 0; }
.manual-group { height: 99px; margin-top: 18px; padding: 3px 9px 0 1px; }
.manual-group legend { margin-left: 3px; }
.manual-input { height: 44px; background: #fff; border: 1px solid #b4b4b4; border-bottom-color: #e8e8e8; border-left-color: #e8e8e8; }
.manual-row { display: flex; align-items: center; margin-top: 7px; }
.btn {
  height: 23px;
  flex: none;
  display: flex;
  align-items: center;
  justify-content: center;
  line-height: 16px;
  white-space: nowrap;
  border: 1px solid #707070;
  border-radius: 3px;
  background: linear-gradient(#f4f4f4, #ececec 45%, #dcdcdc 50%, #d0d0d0);
}
.btn-reset { width: 88px; margin-left: 7px; }
.manual-label { margin-left: 23px; width: 86px; flex: none; }
.manual-result { flex: 1; height: 20px; background: #fdfde0; border-top: 1px solid #b0b0b0; }
.dlg-foot { display: flex; margin-top: 13px; }
.btn-rule { width: 106px; }
.btn-3d { width: 113px; margin-left: 18px; }
.btn-detail { width: 108px; margin-left: 18px; }
.btn-close {
  width: 73px;
  margin-left: auto;
  border-color: #3c9ec8;
  box-shadow: inset 0 0 0 1px #a8e4f8;
  background: linear-gradient(#f0f8fc, #e4f2f8 45%, #c8e4f0 50%, #b8dcea);
}
.marker {
  position: absolute;
  left: 11px;
  top: 98px;
  pointer-events: none;
}
.marker ellipse { fill: none; stroke: #ee22ee; stroke-width: 8; }
```
